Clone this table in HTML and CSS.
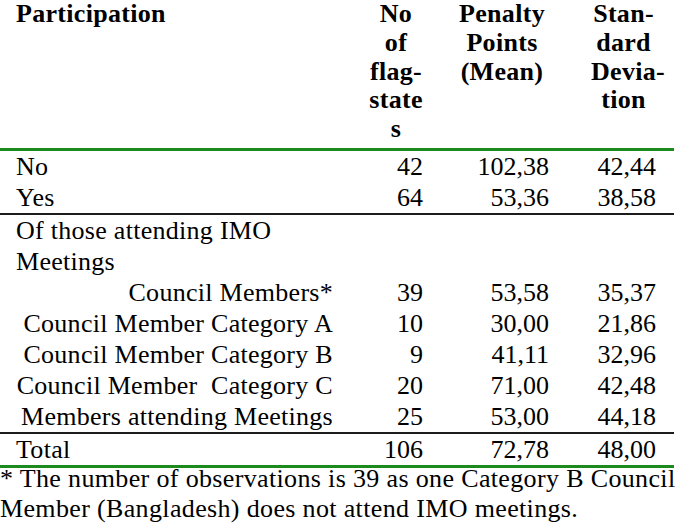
FILE: index.html
```html
<!DOCTYPE html>
<html>
<head>
<meta charset="utf-8">
<link rel="stylesheet" href="styles.css">
</head>
<body>
<table class="pp-table">
  <colgroup>
    <col class="pp-c1"><col class="pp-c2"><col class="pp-c3"><col class="pp-c4">
  </colgroup>
  <thead>
    <tr>
      <th class="pp-hl">Participation</th>
      <th class="pp-hn">No<br>of<br>flag-<br>state<br>s</th>
      <th class="pp-hm">Penalty<br>Points<br>(Mean)</th>
      <th class="pp-hs">Stan-<br>dard<br>Devia-<br>tion</th>
    </tr>
  </thead>
  <tbody>
    <tr><td class="pp-l">No</td><td class="pp-v pp-vn">42</td><td class="pp-v pp-vm">102,38</td><td class="pp-v pp-vs">42,44</td></tr>
    <tr class="pp-sep"><td class="pp-l">Yes</td><td class="pp-v pp-vn">64</td><td class="pp-v pp-vm">53,36</td><td class="pp-v pp-vs">38,58</td></tr>
    <tr><td class="pp-l">Of those attending IMO<br>Meetings</td><td></td><td></td><td></td></tr>
    <tr><td class="pp-l pp-r">Council Members*</td><td class="pp-v pp-vn">39</td><td class="pp-v pp-vm">53,58</td><td class="pp-v pp-vs">35,37</td></tr>
    <tr><td class="pp-l pp-r">Council Member Category A</td><td class="pp-v pp-vn">10</td><td class="pp-v pp-vm">30,00</td><td class="pp-v pp-vs">21,86</td></tr>
    <tr><td class="pp-l pp-r">Council Member Category B</td><td class="pp-v pp-vn">9</td><td class="pp-v pp-vm">41,11</td><td class="pp-v pp-vs">32,96</td></tr>
    <tr><td class="pp-l pp-r">Council Member &nbsp;Category C</td><td class="pp-v pp-vn">20</td><td class="pp-v pp-vm">71,00</td><td class="pp-v pp-vs">42,48</td></tr>
    <tr class="pp-sep"><td class="pp-l pp-r">Members attending Meetings</td><td class="pp-v pp-vn">25</td><td class="pp-v pp-vm">53,00</td><td class="pp-v pp-vs">44,18</td></tr>
    <tr class="pp-tot"><td class="pp-l">Total</td><td class="pp-v pp-vn">106</td><td class="pp-v pp-vm">72,78</td><td class="pp-v pp-vs">48,00</td></tr>
  </tbody>
</table>
<p class="pp-note">* The number of observations is 39 as one Category B Council Member (Bangladesh) does not attend IMO meetings.</p>
</body>
</html>
```

FILE: styles.css
```css
html, body {
  margin: 0;
  padding: 0;
  background: #ffffff;
}

body {
  font-family: "Liberation Serif", "Times New Roman", serif;
  font-size: 26px;
  color: #000;
}

.pp-table {
  width: 674px;
  margin: 0;
  border-collapse: separate;
  border-spacing: 0;
  table-layout: fixed;
  font-family: "Liberation Serif", "Times New Roman", serif;
  font-size: 26px;
}

.pp-c1 { width: 345px; }
.pp-c2 { width: 90px; }
.pp-c3 { width: 126px; }
.pp-c4 { width: 113px; }

.pp-table th {
  font-weight: bold;
  font-size: 26px;
  line-height: 28.8px;
  vertical-align: top;
  white-space: nowrap;
  padding: 0 0 4px 0;
  border-bottom: 3px solid #1d8a1d;
  letter-spacing: 0.3px;
}

.pp-hl { text-align: left; padding-left: 16px !important; }
.pp-hn { text-align: center; padding-left: 24px !important; padding-right: 12px !important; }
.pp-hm { text-align: center; padding-left: 20px !important; padding-right: 12px !important; }
.pp-hs { text-align: center; padding-left: 30px !important; padding-right: 18px !important; }

.pp-table td {
  font-size: 26px;
  line-height: 31px;
  padding: 0;
  vertical-align: top;
  white-space: nowrap;
}

.pp-l {
  text-align: left;
  padding-left: 16px !important;
  letter-spacing: 0.28px;
}

.pp-r {
  text-align: right;
  padding-left: 0 !important;
  padding-right: 12px !important;
}

.pp-v { text-align: right; }
.pp-vn { padding-right: 12px !important; }
.pp-vm { padding-right: 12px !important; }
.pp-vs { padding-right: 18px !important; }

.pp-sep td {
  border-bottom: 2px solid #1c1c1c;
}

.pp-tot td {
  border-bottom: 3px solid #1d8a1d;
}

.pp-note {
  margin: -4px 0 0 0;
  font-size: 26px;
  line-height: 30px;
  letter-spacing: 0.35px;
  width: 680px;
}
```
